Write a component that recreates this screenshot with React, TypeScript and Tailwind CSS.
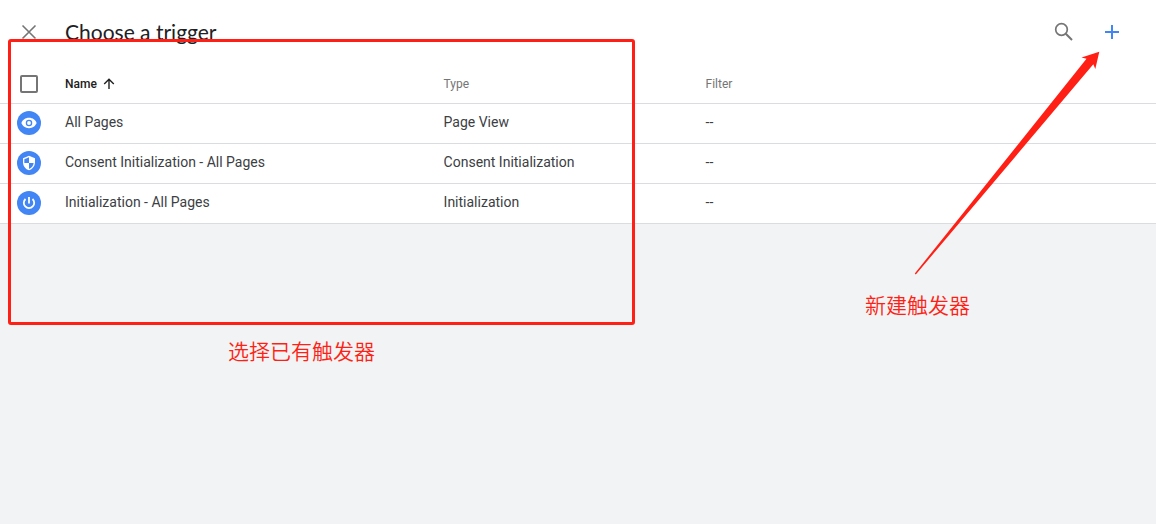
import React, { useState } from 'react';
import { MdAdd, MdSecurity } from 'react-icons/md';

interface Trigger {
  name: string;
  type: string;
  filter: string;
  icon: React.ElementType;
}

const EyeIcon: React.FC = () => (
  <svg width="18" height="18" viewBox="0 0 18 18">
    <path fill="currentColor" d="M9 3.800C5.300 3.800 2.500 6 1.400 9 2.500 12 5.300 14.200 9 14.200S15.500 12 16.600 9C15.500 6 12.700 3.800 9 3.800Z" />
    <circle cx="9" cy="9" r="2.600" fill="none" stroke="#4285f4" strokeWidth="1.300" />
  </svg>
);

const ShieldIcon: React.FC = () => <MdSecurity size={16} />;

const PowerIcon: React.FC = () => (
  <svg width="18" height="18" viewBox="0 0 18 18" fill="none" stroke="currentColor" strokeWidth="1.8">
    <path d="M9 3V9.500M5.500 5a5.200 5.200 0 1 0 7 0" />
  </svg>
);

const triggers: Trigger[] = [
  { name: 'All Pages', type: 'Page View', filter: '--', icon: EyeIcon },
  { name: 'Consent Initialization - All Pages', type: 'Consent Initialization', filter: '--', icon: ShieldIcon },
  { name: 'Initialization - All Pages', type: 'Initialization', filter: '--', icon: PowerIcon },
];

const Header: React.FC = () => (
  <header className="flex h-16 items-center bg-white pl-[17px] pr-5">
    <button aria-label="Close" className="text-[#757575]">
      <svg width="24" height="24" viewBox="0 0 24 24" fill="none" stroke="currentColor" strokeWidth="1.6">
        <path d="M5.5 5.5 18.5 18.5M18.5 5.5 5.5 18.5" />
      </svg>
    </button>
    <h1 className="ml-6 flex-1 font-[Lato,sans-serif] text-[21px] text-[#202124]">Choose a trigger</h1>
    <button aria-label="Search" className="flex size-12 items-center justify-center text-[#757575]">
      <svg width="24" height="24" viewBox="0 0 24 24" fill="none" stroke="currentColor" strokeWidth="1.7">
        <circle cx="9.500" cy="9.500" r="5.800" />
        <path d="M13.800 13.800 20 20" strokeWidth="2" />
      </svg>
    </button>
    <button aria-label="New trigger" className="flex size-12 items-center justify-center text-[#4285f4]">
      <MdAdd size={24} />
    </button>
  </header>
);

const TriggerTable: React.FC = () => {
  const [allSelected, setAllSelected] = useState(false);

  return (
    <table className="w-full table-fixed border-separate border-spacing-0 bg-white text-left">
      <thead>
        <tr className="h-10 text-xs text-[#757575]">
          <th className="w-[65px] border-b border-[#dadce0] pl-5">
            <input
              type="checkbox"
              aria-label="Select all triggers"
              checked={allSelected}
              onChange={(e) => setAllSelected(e.target.checked)}
              className="block size-[18px] appearance-none rounded-xs border-2 border-[#757575] checked:bg-[#4285f4]"
            />
          </th>
          <th className="w-[32.75%] border-b border-[#dadce0] font-medium text-[#212121]">
            <button className="flex items-center gap-1.5">
              Name
              <svg width="12" height="12" viewBox="0 0 12 12" fill="none" stroke="currentColor" strokeWidth="1.4">
                <path d="M6 11V1.500M1.200 6 6 1.200 10.800 6" />
              </svg>
            </button>
          </th>
          <th className="w-[22.66%] border-b border-[#dadce0] font-normal">Type</th>
          <th className="border-b border-[#dadce0] font-normal">Filter</th>
        </tr>
      </thead>
      <tbody>
        {triggers.map((trigger) => {
          const Icon = trigger.icon;
          return (
            <tr key={trigger.name} className="h-10 text-sm text-[#3c4043]">
              <td className="border-b border-[#dadce0] pb-0.5 pl-[17px]">
                <span className="flex size-6 items-center justify-center rounded-full bg-[#4285f4] text-white">
                  <Icon />
                </span>
              </td>
              <td className="border-b border-[#dadce0] pb-1">{trigger.name}</td>
              <td className="border-b border-[#dadce0] pb-1">{trigger.type}</td>
              <td className="border-b border-[#dadce0] pb-1">{trigger.filter}</td>
            </tr>
          );
        })}
      </tbody>
    </table>
  );
};

// Red marks explaining the two ways to pick a trigger
const Annotations: React.FC = () => (
  <div className="pointer-events-none absolute inset-0 font-['Noto_Sans_CJK_SC',sans-serif] text-[21px] leading-7 font-[350] text-[#ff1f14]">
    <div className="absolute left-2 top-[39px] h-[286px] w-[627px] rounded-[3px] border-3 border-[#ff1f14]" />
    <p className="absolute left-[228px] top-[336px]">选择已有触发器</p>
    <svg className="absolute right-14 top-[50px]" width="186" height="226" viewBox="0 0 186 226" fill="currentColor">
      <path d="M185.300 1.700 167.500 7.500 172.500 8.700 .8 223.500 1.800 224.500 179.300 14.300 181.300 19Z" />
    </svg>
    <p className="absolute right-[186px] top-[290px]">新建触发器</p>
  </div>
);

const App: React.FC = () => (
  <div className="relative min-h-screen overflow-hidden bg-[#f1f3f4] font-[Roboto,sans-serif]">
    <Header />
    <TriggerTable />
    <Annotations />
  </div>
);

export default App;
